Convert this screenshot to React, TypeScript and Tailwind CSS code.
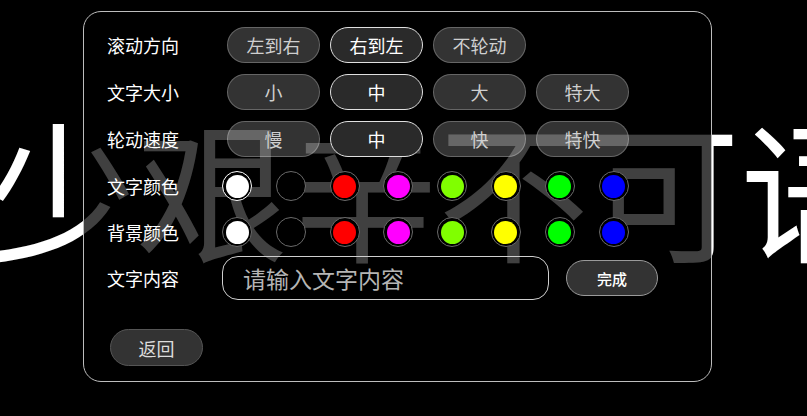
import React, { useState } from 'react';

const FONT = "font-['Noto_Sans_CJK_SC','Noto_Sans',sans-serif]";

const COLORS = ['#ffffff', '#000000', '#ff0000', '#ff00ff', '#80ff00', '#ffff00', '#00ff00', '#0000ff'];

interface PillProps {
  label: string;
  active?: boolean;
  onClick?: () => void;
}

const Pill: React.FC<PillProps> = ({ label, active, onClick }) => (
  <button
    type="button"
    onClick={onClick}
    className={
      active
        ? 'w-[93px] h-[36px] rounded-full border-[1.5px] border-[#e0e0e0] bg-[#2a2a2a] text-white text-[18px] leading-none flex items-center justify-center'
        : 'w-[93px] h-[36px] rounded-full border border-white/25 bg-white/20 text-[#cfcfcf] text-[18px] leading-none flex items-center justify-center'
    }
  >
    {label}
  </button>
);

interface SwatchRowProps {
  selected: number;
  onPick: (i: number) => void;
}

const SwatchRow: React.FC<SwatchRowProps> = ({ selected, onPick }) => (
  <div className="flex items-center gap-[23.8px]">
    {COLORS.map((c, i) => (
      <button
        key={c}
        type="button"
        onClick={() => onPick(i)}
        className={
          i === selected
            ? 'w-[30px] h-[30px] rounded-full border-[1.5px] border-white bg-black flex items-center justify-center'
            : 'w-[30px] h-[30px] rounded-full border border-[#6a6a6a] bg-black flex items-center justify-center'
        }
      >
        <span className="w-[23px] h-[23px] rounded-full" style={{ backgroundColor: c }} />
      </button>
    ))}
  </div>
);

const Row: React.FC<{ label: string; className?: string; children: React.ReactNode }> = ({ label, className, children }) => (
  <div className={`flex items-center ${className ?? ''}`}>
    <div className="w-[115px] shrink-0 text-[18px] text-white leading-none">{label}</div>
    {children}
  </div>
);

export default function App() {
  const [dir, setDir] = useState(1);
  const [size, setSize] = useState(1);
  const [speed, setSpeed] = useState(1);
  const [fg, setFg] = useState(0);
  const [bg, setBg] = useState(-1);
  const [text, setText] = useState('');

  return (
    <div className={`relative w-full h-[416px] bg-black overflow-hidden ${FONT}`}>
      {/* 滚动的大字 */}
      <div className="absolute left-[-15px] top-[110px] whitespace-nowrap text-white text-[151px] leading-none pointer-events-none">
        少艰辛不可语
      </div>

      {/* 设置面板 */}
      <div className="relative ml-[83px] mt-[11px] w-[629px] h-[371px] rounded-[18px] border border-[#bdbdbd] bg-black/75 pl-[23px] pt-[15px]">
        <Row label="滚动方向" className="h-[36px]">
          <div className="flex gap-[10px] ml-[5px]">
            {['左到右', '右到左', '不轮动'].map((t, i) => (
              <Pill key={t} label={t} active={dir === i} onClick={() => setDir(i)} />
            ))}
          </div>
        </Row>
        <Row label="文字大小" className="h-[36px] mt-[11px]">
          <div className="flex gap-[10px] ml-[5px]">
            {['小', '中', '大', '特大'].map((t, i) => (
              <Pill key={t} label={t} active={size === i} onClick={() => setSize(i)} />
            ))}
          </div>
        </Row>
        <Row label="轮动速度" className="h-[36px] mt-[11px]">
          <div className="flex gap-[10px] ml-[5px]">
            {['慢', '中', '快', '特快'].map((t, i) => (
              <Pill key={t} label={t} active={speed === i} onClick={() => setSpeed(i)} />
            ))}
          </div>
        </Row>
        <Row label="文字颜色" className="h-[36px] mt-[11px]">
          <SwatchRow selected={fg} onPick={setFg} />
        </Row>
        <Row label="背景颜色" className="h-[36px] mt-[10px]">
          <SwatchRow selected={bg} onPick={setBg} />
        </Row>
        <Row label="文字内容" className="h-[44px] mt-[6px]">
          <input
            value={text}
            onChange={(e) => setText(e.target.value)}
            placeholder="请输入文字内容"
            className="w-[327px] h-[44px] rounded-[16px] border border-[#cfcfcf] bg-transparent pl-[20px] text-[23px] text-white placeholder:text-[#b5b5b5] outline-none"
          />
          <button
            type="button"
            className="ml-[17px] w-[92px] h-[36px] rounded-full border border-[#9a9a9a] bg-[#333333] text-white text-[15px] font-medium leading-none"
          >
            完成
          </button>
        </Row>
        <button
          type="button"
          className="mt-[29px] ml-[3px] w-[93px] h-[37px] rounded-full border border-[#555555] bg-[#333333] text-[#dcdcdc] text-[18px] leading-none"
        >
          返回
        </button>
      </div>
    </div>
  );
}
